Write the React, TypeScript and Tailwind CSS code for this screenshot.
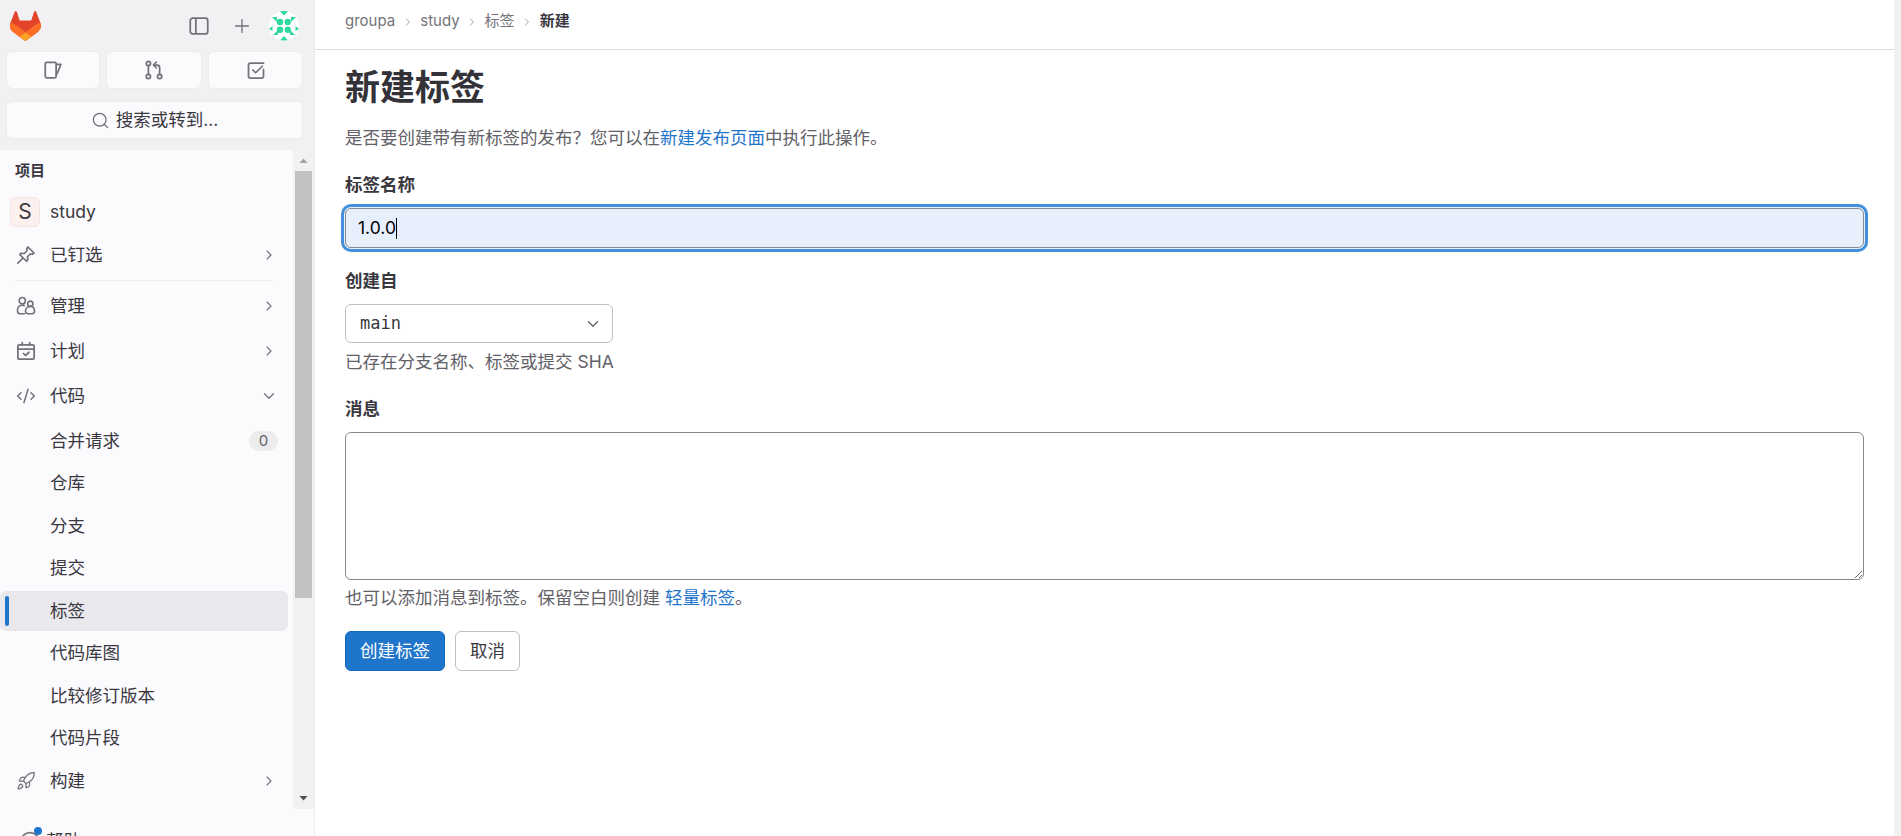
import React from "react";
import { ChevronDown, ChevronRight, CodeXml, Plus, Rocket, Search } from "lucide-react";

const font = "font-['Inter','Noto_Sans_CJK_SC',sans-serif]";

const Tanuki = () => (
  <svg width="31" height="30" viewBox="0 0 25 24" fill="none">
    <path d="m24.507 9.5-.034-.09L21.082.562a.896.896 0 0 0-1.694.091l-2.29 7.01H7.825L5.535.653a.898.898 0 0 0-1.694-.09L.451 9.411.416 9.5a6.297 6.297 0 0 0 2.09 7.278l.012.01.03.022 5.16 3.867 2.56 1.935 1.554 1.176a1.051 1.051 0 0 0 1.268 0l1.555-1.176 2.56-1.935 5.197-3.89.014-.01A6.297 6.297 0 0 0 24.507 9.5Z" fill="#E24329" />
    <path d="m24.507 9.5-.034-.09a11.44 11.44 0 0 0-4.56 2.051l-7.447 5.632 4.742 3.584 5.197-3.89.014-.01A6.297 6.297 0 0 0 24.507 9.5Z" fill="#FC6D26" />
    <path d="m7.707 20.677 2.56 1.935 1.555 1.176a1.051 1.051 0 0 0 1.268 0l1.555-1.176 2.56-1.935-4.743-3.584-4.755 3.584Z" fill="#FCA326" />
    <path d="M5.01 11.461a11.43 11.43 0 0 0-4.56-2.05L.416 9.5a6.297 6.297 0 0 0 2.09 7.278l.012.01.03.022 5.16 3.867 4.745-3.584-7.444-5.632Z" fill="#FC6D26" />
  </svg>
);

const Identicon = () => (
  <svg width="30" height="30" viewBox="0 0 30 30" className="rounded-full bg-white">
    <g fill="#2fd8a0">
      <path d="M10.5 0h9L15 4.5z" />
      <path d="M3 6h5v5z" />
      <path d="M27 6h-5v5z" />
      <path d="M0 18l3.5-3v5z" />
      <path d="M30 18l-3.5-3v5z" />
      <path d="M4 24h5v-5z" />
      <path d="M26 24h-5v-5z" />
      <path d="M11 29.5h8L15 25z" />
      <circle cx="11" cy="11" r="3.2" />
      <circle cx="18.7" cy="11" r="3.2" />
      <circle cx="11" cy="18.7" r="3.2" />
      <circle cx="18.7" cy="18.7" r="3.2" />
    </g>
  </svg>
);

const PanelIcon = () => (
  <svg width="20" height="20" viewBox="0 0 16 16" fill="none" stroke="#737278" strokeWidth="1.4">
    <rect x="1" y="1.7" width="14" height="12.6" rx="2" />
    <path d="M5.5 1.7v12.6" />
  </svg>
);

const IssueIcon = () => (
  <svg width="20" height="20" viewBox="0 0 16 16" fill="none" stroke="#737278" strokeWidth="1.4" strokeLinejoin="round">
    <path d="M3 1.8h6.5a1 1 0 0 1 1 1v10.4a1 1 0 0 1-1 1H3a1.2 1.2 0 0 1-1.2-1.2V3A1.2 1.2 0 0 1 3 1.8z" />
    <path d="M10.5 3.5h3.8L11.7 10l-1.2 2" />
  </svg>
);

const MergeIcon = () => (
  <svg width="20" height="20" viewBox="0 0 16 16" fill="none" stroke="#737278" strokeWidth="1.4" strokeLinecap="round" strokeLinejoin="round">
    <circle cx="3.5" cy="2.8" r="1.7" />
    <circle cx="3.5" cy="13.2" r="1.7" />
    <circle cx="12.5" cy="13.2" r="1.7" />
    <path d="M3.5 4.5v7" />
    <path d="M12.5 11.5V6a2 2 0 0 0-2-2H8" />
    <path d="M9.7 1.8 7.6 4l2.1 2.2" />
  </svg>
);

const TodoIcon = () => (
  <svg width="20" height="20" viewBox="0 0 16 16" fill="none" stroke="#737278" strokeWidth="1.4" strokeLinecap="round" strokeLinejoin="round">
    <path d="M14 7.5V13a1.5 1.5 0 0 1-1.5 1.5h-9A1.5 1.5 0 0 1 2 13V4a1.5 1.5 0 0 1 1.5-1.5H14" />
    <path d="m5.5 8 2.2 2.2L13 5" />
  </svg>
);

const PinIcon = () => (
  <svg width="20" height="20" viewBox="0 0 16 16" fill="none" stroke="#737278" strokeWidth="1.4" strokeLinecap="round" strokeLinejoin="round">
    <path d="M9.6 1.6l4.8 4.8-1.4 1-1.6-.2-2.2 2.2.2 2.6-1 1L3 7.6l1-1 2.6.2 2.2-2.2-.2-1.6z" />
    <path d="M5.2 10.8 1.5 14.5" />
  </svg>
);

const UsersIcon = () => (
  <svg width="20" height="20" viewBox="0 0 16 16" fill="none" stroke="#737278" strokeWidth="1.3">
    <circle cx="5" cy="3.7" r="2.5" />
    <path d="M1.2 11.5c0-2.8 1.4-4.2 3.8-4.2.9 0 1.6.2 2.1.6M1.2 11.5c0 1.5.7 2.7 2 2.7h4" />
    <circle cx="11.4" cy="6.2" r="2.1" />
    <path d="M7.6 12c0-2.2 1.4-3.6 3.8-3.6s3.4 1.4 3.4 3.6c0 1.4-.8 2.2-2 2.2h-3c-1.4 0-2.2-.8-2.2-2.2z" />
  </svg>
);

const CalendarIcon = () => (
  <svg width="20" height="20" viewBox="0 0 16 16" fill="none" stroke="#737278" strokeWidth="1.4" strokeLinecap="round" strokeLinejoin="round">
    <rect x="1.5" y="3" width="13" height="11.5" rx="1" />
    <path d="M1.5 6.5h13M5 1.2V3M11 1.2V3" />
    <path d="m6 10 1.6 1.6L10.4 9" />
  </svg>
);

const HelpIcon = () => (
  <svg width="20" height="20" viewBox="0 0 16 16" fill="none" stroke="#737278" strokeWidth="1.4">
    <circle cx="8" cy="8" r="6.8" />
    <circle cx="8" cy="8" r="2.8" />
  </svg>
);

const Row = ({ icon, label, chevron }: { icon?: React.ReactNode; label: string; chevron?: "right" | "down" }) => (
  <div className="flex h-10 w-[288px] shrink-0 items-center pl-4 pr-2.5 text-[17.5px] text-[#3a383f]">
    <span className="flex w-5 shrink-0 justify-center">{icon}</span>
    <span className="ml-[14px] flex-1">{label}</span>
    {chevron === "right" && <ChevronRight size={16} strokeWidth={1.6} color="#737278" className="mr-[1px]" />}
    {chevron === "down" && <ChevronDown size={18} strokeWidth={1.6} color="#737278" />}
  </div>
);

const Sidebar = () => (
  <aside className="flex h-full w-[315px] shrink-0 flex-col overflow-hidden border-r border-[#ececef] bg-[#f1f1f3]">
    <div className="flex h-[51px] shrink-0 items-center pl-2.5 pr-[15px]">
      <Tanuki />
      <div className="ml-auto flex items-center">
        <PanelIcon />
        <span className="ml-[22px] mr-[16px]">
          <Plus size={22} strokeWidth={1.5} color="#737278" />
        </span>
        <Identicon />
      </div>
    </div>
    <div className="flex shrink-0 gap-[6px] pl-1.5 pr-[11px]">
      <div className="flex h-[38px] w-[94px] items-center justify-center rounded-md border border-[#ececef] bg-[#fbfafd]"><IssueIcon /></div>
      <div className="flex h-[38px] w-[96px] items-center justify-center rounded-md border border-[#ececef] bg-[#fbfafd]"><MergeIcon /></div>
      <div className="flex h-[38px] w-[95px] items-center justify-center rounded-md border border-[#ececef] bg-[#fbfafd]"><TodoIcon /></div>
    </div>
    <div className="ml-1.5 mr-[11px] mt-3 flex h-[38px] shrink-0 items-center justify-center gap-[6px] rounded-md border border-[#ececef] bg-[#fbfafd] text-[17.5px] text-[#3a383f]">
      <Search size={19} strokeWidth={1.7} color="#737278" />
      搜索或转到...
    </div>
    <div className="mt-[11px] flex h-[659px] shrink-0 bg-[#fbfafd]">
      <nav className="flex flex-1 flex-col overflow-hidden">
        <div className="mt-[11px] pl-[15px] text-[15px] font-semibold leading-5 text-[#3a383f]">项目</div>
        <div className="mt-[11px] flex h-[40px] shrink-0 items-center pl-2.5 text-[17.5px] text-[#3a383f]">
          <span className="flex h-[30px] w-[30px] items-center justify-center rounded-md border border-[#f4e3df] bg-[#fdf1ef] text-[21px]">S</span>
          <span className="ml-[10px]">study</span>
        </div>
        <div className="mt-[3px]">
          <Row icon={<PinIcon />} label="已钉选" chevron="right" />
        </div>
        <div className="ml-[15px] mr-[20px] mt-[5px] h-px w-[258px] shrink-0 bg-[#ececef]" />
        <div className="mt-[5px] flex flex-col gap-[5px]">
          <Row icon={<UsersIcon />} label="管理" chevron="right" />
          <Row icon={<CalendarIcon />} label="计划" chevron="right" />
          <Row icon={<CodeXml size={20} strokeWidth={1.8} color="#737278" />} label="代码" chevron="down" />
        </div>
        <div className="mt-[5px] flex flex-col gap-[2.5px]">
          <div className="flex h-10 w-[288px] shrink-0 items-center pl-[50px] pr-[10px] text-[17.5px] text-[#3a383f]">
            <span className="flex-1">合并请求</span>
            <span className="flex h-5 w-[29px] items-center justify-center rounded-full bg-[#ececef] text-[15px] text-[#626168]">0</span>
          </div>
          <Row label="仓库" />
          <Row label="分支" />
          <Row label="提交" />
          <div className="relative flex h-10 w-[288px] shrink-0 items-center rounded-md bg-[#e9e8ec] pl-[50px] text-[17.5px] text-[#3a383f]">
            <span className="absolute left-[5px] top-[5px] h-[30px] w-1 rounded-full bg-[#1f75cb]" />
            标签
          </div>
          <Row label="代码库图" />
          <Row label="比较修订版本" />
          <Row label="代码片段" />
          <Row icon={<Rocket size={20} strokeWidth={1.5} color="#737278" />} label="构建" chevron="right" />
        </div>
      </nav>
      <div className="flex w-[21px] shrink-0 flex-col items-center bg-[#f1f1f1]">
        <svg width="21" height="21" viewBox="0 0 21 21" className="shrink-0"><path d="M6.5 13 10.5 8.5 14.5 13z" fill="#a3a3a3" /></svg>
        <div className="h-[427px] w-[17px] shrink-0 bg-[#c1c1c1]" />
        <svg width="21" height="21" viewBox="0 0 21 21" className="mt-auto shrink-0"><path d="M6.5 8 10.5 12.5 14.5 8z" fill="#505050" /></svg>
      </div>
    </div>
    <div className="relative flex-1 bg-[#fbfafd] pl-5 pt-[22px] text-[17.5px] leading-5 text-[#3a383f]">
      <div className="flex items-start gap-[6px]">
        <HelpIcon />
        帮助
      </div>
      <span className="absolute left-[34px] top-[18px] h-2 w-2 rounded-full bg-[#1f75cb]" />
    </div>
  </aside>
);

const Crumb = ({ label }: { label: string }) => (
  <>
    <span className="text-[#737278]">{label}</span>
    <ChevronRight size={12} strokeWidth={1.6} color="#89888d" className="mx-[6.5px]" />
  </>
);

export default function App() {
  return (
    <div className={`flex h-screen w-full overflow-hidden bg-white ${font}`}>
      <Sidebar />
      <main className="flex min-w-0 flex-1 flex-col">
        <div className="flex h-[50px] shrink-0 items-center border-b border-[#dcdcde] pb-[6px] pl-[30px] text-[15px]">
          <Crumb label="groupa" />
          <Crumb label="study" />
          <Crumb label="标签" />
          <span className="font-semibold text-[#3a383f]">新建</span>
        </div>
        <div className="flex flex-col pl-[30px] pr-[30px] text-[17.5px] text-[#3a383f]">
          <h1 className="mt-[12px] text-[35px] font-bold leading-[50px] text-[#333238]">新建标签</h1>
          <p className="mt-[13px] leading-[25px] text-[#626168]">
            是否要创建带有新标签的发布？您可以在<span className="text-[#1f75cb]">新建发布页面</span>中执行此操作。
          </p>
          <label className="mt-[22px] font-semibold leading-[25px]">标签名称</label>
          <div className="mt-[11px] flex h-10 items-center rounded-md border border-[#89888d] bg-[#e8effc] pl-[12px] text-black ring-[3px] ring-[#428fdc] ring-offset-[1px] ring-offset-[#e8effc]">
            1.0.0<span className="h-[21px] w-px bg-black" />
          </div>
          <label className="mt-[20px] font-semibold leading-[25px]">创建自</label>
          <div className="mt-[11px] flex h-[39px] w-[268px] items-center justify-between rounded-md border border-[#bfbfc3] pl-[14px] pr-[10px]">
            <span className="font-['DejaVu_Sans_Mono',monospace] text-[17px]">main</span>
            <ChevronDown size={18} strokeWidth={1.7} color="#626168" />
          </div>
          <p className="mt-[6px] leading-[25px] text-[#626168]">已存在分支名称、标签或提交 SHA</p>
          <label className="mt-[22px] font-semibold leading-[25px]">消息</label>
          <textarea className="mt-[11px] h-[148px] rounded-md border border-[#89888d] bg-white outline-none" />
          <p className="mt-[5px] leading-[25px] text-[#626168]">
            也可以添加消息到标签。保留空白则创建 <span className="text-[#1f75cb]">轻量标签</span>。
          </p>
          <div className="mt-[21px] flex gap-[10px]">
            <button className="flex h-10 w-[100px] items-center justify-center rounded-md border border-[#1068bf] bg-[#1f75cb] text-white">创建标签</button>
            <button className="flex h-10 w-[65px] items-center justify-center rounded-md border border-[#bfbfc3] bg-white">取消</button>
          </div>
        </div>
      </main>
      <div className="h-full w-[7px] shrink-0 bg-[#f1f1f1]" />
    </div>
  );
}
